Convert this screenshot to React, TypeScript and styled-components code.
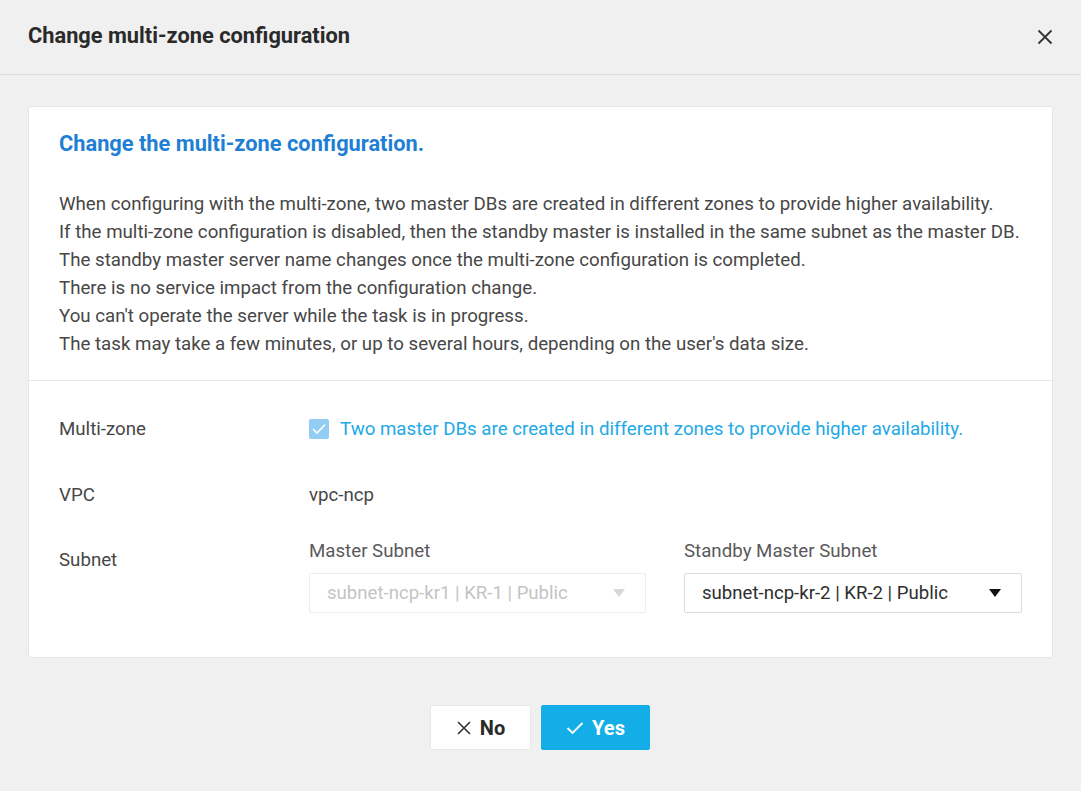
import React from "react";
import styled, { createGlobalStyle } from "styled-components";

const Global = createGlobalStyle`
  html, body { margin: 0; padding: 0; background: #f0f0f0; }
  body { font-family: Roboto, "Noto Sans", "Liberation Sans", sans-serif; }
  * { box-sizing: border-box; }
`;

const Modal = styled.div`
  width: 1081px;
  height: 791px;
  background: #f0f0f0;
  display: flex;
  flex-direction: column;
`;

const Header = styled.header`
  height: 75px;
  border-bottom: 1px solid #dedede;
  display: flex;
  align-items: center;
  justify-content: space-between;
  padding: 0 26px 0 28px;
`;

const Title = styled.h1`
  margin: 0;
  font-size: 21.8px;
  font-weight: 700;
  color: #2a2a2a;
  padding-bottom: 3px;
`;

const CloseBtn = styled.button`
  border: 0;
  background: transparent;
  padding: 0;
  width: 20px;
  height: 20px;
  display: flex;
  align-items: center;
  justify-content: center;
  color: #333;
`;

const Body = styled.div`
  padding: 31px 28px 0 28px;
  display: flex;
  flex-direction: column;
`;

const Card = styled.section`
  background: #fff;
  border: 1px solid #e6e6e6;
  border-radius: 3px;
  display: flex;
  flex-direction: column;
`;

const Notice = styled.div`
  padding: 24px 30px 22px 30px;
  border-bottom: 1px solid #e8e8e8;
`;

const NoticeTitle = styled.h2`
  margin: 0 0 33px 0;
  font-size: 21.8px;
  line-height: 26px;
  font-weight: 700;
  color: #1f7fd4;
`;

const Line = styled.p`
  margin: 0;
  font-size: 18.7px;
  line-height: 28px;
  color: #474747;
  white-space: nowrap;
`;

const Form = styled.div`
  padding: 34px 30px 44px 30px;
  display: flex;
  flex-direction: column;
`;

const Row = styled.div<{ $top: number; $align?: string }>`
  display: grid;
  grid-template-columns: 250px 1fr;
  align-items: ${(p) => p.$align ?? "center"};
  min-height: 28px;
  margin-top: ${(p) => p.$top}px;
`;

const Label = styled.div<{ $pad?: number }>`
  font-size: 18.7px;
  line-height: 22px;
  color: #474747;
  padding-top: ${(p) => p.$pad ?? 0}px;
`;

const Value = styled.div`
  font-size: 18.7px;
  color: #474747;
`;

const CheckWrap = styled.label`
  display: flex;
  align-items: center;
  gap: 11px;
  font-size: 18.7px;
  color: #22a9e6;
  white-space: nowrap;
`;

const CheckBox = styled.span`
  width: 20px;
  height: 20px;
  border-radius: 2px;
  background: #93cdf3;
  display: flex;
  align-items: center;
  justify-content: center;
`;

const SubnetGrid = styled.div`
  display: grid;
  grid-template-columns: 337px 338px;
  column-gap: 38px;
`;

const SubnetCol = styled.div`
  display: flex;
  flex-direction: column;
  gap: 11px;
`;

const SubLabel = styled.div`
  font-size: 18.7px;
  line-height: 22px;
  color: #5a5a5a;
`;

const Select = styled.div<{ $disabled?: boolean }>`
  height: 40px;
  border: 1px solid ${(p) => (p.$disabled ? "#ececec" : "#dcdcdc")};
  border-radius: 2px;
  background: #fff;
  display: flex;
  align-items: center;
  justify-content: space-between;
  padding: 0 20px 0 17px;
  font-size: 18.6px;
  white-space: nowrap;
  color: ${(p) => (p.$disabled ? "#c4c4c4" : "#2e2e2e")};
`;

const Caret = styled.span<{ $disabled?: boolean }>`
  width: 0;
  height: 0;
  border-left: 6px solid transparent;
  border-right: 6px solid transparent;
  border-top: 8px solid ${(p) => (p.$disabled ? "#d8d8d8" : "#111")};
`;

const Footer = styled.div`
  display: flex;
  justify-content: center;
  gap: 10px;
  padding-top: 47px;
  padding-right: 1px;
`;

const Button = styled.button<{ $primary?: boolean }>`
  height: 45px;
  border: 1px solid ${(p) => (p.$primary ? "#13aee8" : "#e8e8e8")};
  background: ${(p) => (p.$primary ? "#13aee8" : "#fff")};
  color: ${(p) => (p.$primary ? "#fff" : "#2a2a2a")};
  border-radius: 2px;
  font-family: Roboto, "Liberation Sans", sans-serif;
  font-size: 20px;
  font-weight: 700;
  display: flex;
  align-items: center;
  justify-content: center;
  gap: 8px;
  padding: 0;
  width: ${(p) => (p.$primary ? "109px" : "101px")};
`;

const lines = [
  "When configuring with the multi-zone, two master DBs are created in different zones to provide higher availability.",
  "If the multi-zone configuration is disabled, then the standby master is installed in the same subnet as the master DB.",
  "The standby master server name changes once the multi-zone configuration is completed.",
  "There is no service impact from the configuration change.",
  "You can't operate the server while the task is in progress.",
  "The task may take a few minutes, or up to several hours, depending on the user's data size.",
];

export default function App() {
  return (
    <>
      <Global />
      <Modal>
        <Header>
          <Title>Change multi-zone configuration</Title>
          <CloseBtn aria-label="close">
            <svg width="16" height="16" viewBox="0 0 16 16">
              <path d="M1.5 1.5 L14.5 14.5 M14.5 1.5 L1.5 14.5" stroke="#333" strokeWidth="1.8" fill="none" />
            </svg>
          </CloseBtn>
        </Header>
        <Body>
          <Card>
            <Notice>
              <NoticeTitle>Change the multi-zone configuration.</NoticeTitle>
              {lines.map((l) => (
                <Line key={l}>{l}</Line>
              ))}
            </Notice>
            <Form>
              <Row $top={0}>
                <Label>Multi-zone</Label>
                <CheckWrap>
                  <CheckBox>
                    <svg width="14" height="12" viewBox="0 0 14 12">
                      <path d="M1 6.2 L5 10 L13 1.5" stroke="#fff" strokeWidth="1.6" fill="none" />
                    </svg>
                  </CheckBox>
                  Two master DBs are created in different zones to provide higher availability.
                </CheckWrap>
              </Row>
              <Row $top={38}>
                <Label>VPC</Label>
                <Value>vpc-ncp</Value>
              </Row>
              <Row $top={31} $align="start">
                <Label $pad={9}>Subnet</Label>
                <SubnetGrid>
                  <SubnetCol>
                    <SubLabel>Master Subnet</SubLabel>
                    <Select $disabled>
                      subnet-ncp-kr1 | KR-1 | Public
                      <Caret $disabled />
                    </Select>
                  </SubnetCol>
                  <SubnetCol>
                    <SubLabel>Standby Master Subnet</SubLabel>
                    <Select>
                      subnet-ncp-kr-2 | KR-2 | Public
                      <Caret />
                    </Select>
                  </SubnetCol>
                </SubnetGrid>
              </Row>
            </Form>
          </Card>
          <Footer>
            <Button>
              <svg width="16" height="16" viewBox="0 0 16 16">
                <path d="M2 2 L14 14 M14 2 L2 14" stroke="#333" strokeWidth="1.6" fill="none" />
              </svg>
              No
            </Button>
            <Button $primary>
              <svg width="18" height="14" viewBox="0 0 18 14">
                <path d="M1.5 7 L6.5 12 L16.5 2" stroke="#fff" strokeWidth="1.8" fill="none" />
              </svg>
              Yes
            </Button>
          </Footer>
        </Body>
      </Modal>
    </>
  );
}
